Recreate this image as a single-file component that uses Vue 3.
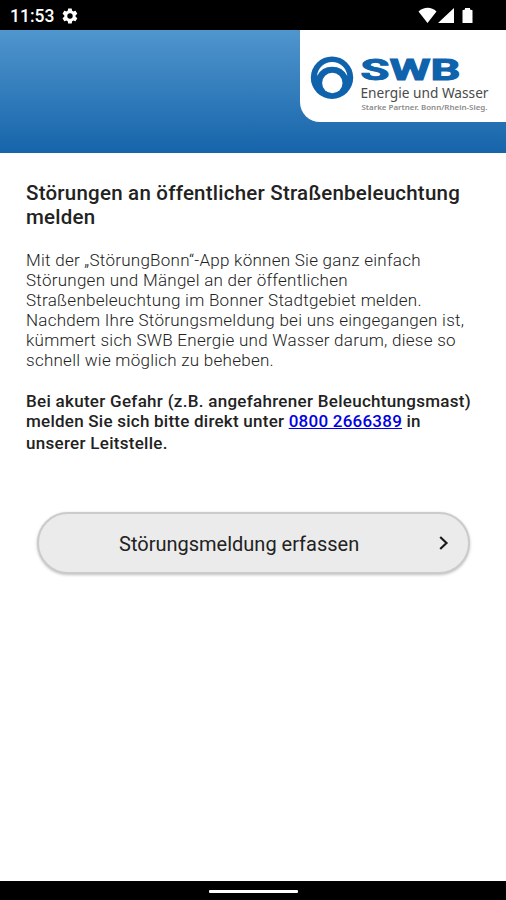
<script setup>
const intro = [
  'Mit der „StörungBonn“-App können Sie ganz einfach',
  'Störungen und Mängel an der öffentlichen',
  'Straßenbeleuchtung im Bonner Stadtgebiet melden.',
  'Nachdem Ihre Störungsmeldung bei uns eingegangen ist,',
  'kümmert sich SWB Energie und Wasser darum, diese so',
  'schnell wie möglich zu beheben.',
]
</script>

<template>
  <div class="screen">
    <div class="status">
      <span class="time">11:53</span>
      <svg class="gear" width="18" height="18" viewBox="0 0 24 24">
        <path fill="#fff" fill-rule="evenodd" d="M19.4 13c.1-.3.1-.7.1-1s0-.7-.1-1l2.1-1.600c.2-.2.2-.4.1-.6l-2-3.500c-.1-.2-.4-.3-.6-.2l-2.500 1c-.5-.4-1.100-.7-1.700-1l-.4-2.600c0-.3-.2-.5-.5-.5h-4c-.2 0-.5.200-.5.400l-.4 2.700c-.6.200-1.200.6-1.700 1l-2.500-1c-.2-.1-.5 0-.6.200l-2 3.500c-.1.200-.1.500.1.600l2.100 1.600c0 .3-.1.700-.1 1s0 .7.100 1l-2.100 1.600c-.2.200-.2.400-.1.600l2 3.500c.1.200.4.300.6.200l2.500-1c.5.400 1.100.7 1.700 1l.4 2.600c0 .3.200.5.500.5h4c.2 0 .5-.2.500-.4l.4-2.700c.6-.2 1.200-.6 1.700-1l2.500 1c.2.100.5 0 .6-.2l2-3.500c.1-.2.100-.5-.1-.6zM12 15.600a3.600 3.600 0 1 1 0-7.200 3.600 3.600 0 0 1 0 7.200z" />
      </svg>
      <svg class="signals" width="56" height="18" viewBox="0 0 56 18">
        <path fill="#fff" d="M.5 4.500C6-.4 13.500-.4 18.500 4.500L9.500 16zM20 16 36 1v15zM44.500 3.200 47 2.500V1h5v1.500l2.500.7V16h-10z" />
      </svg>
    </div>

    <header class="banner">
      <div class="logo">
        <svg width="206" height="92" viewBox="0 0 206 92">
          <circle cx="32" cy="47.700" r="21.200" fill="#0f63ad" />
          <path fill="#fff" d="M17 46A15.200 15.200 0 0 1 47.300 46A17 17 0 0 0 17 46Z" />
          <circle cx="32.300" cy="53" r="10.200" fill="#fff" />
          <text class="swb" x="60.500" y="50" textLength="100" lengthAdjust="spacingAndGlyphs">SWB</text>
          <text class="name" x="60.500" y="68" textLength="128" lengthAdjust="spacingAndGlyphs">Energie und Wasser</text>
          <text class="claim" x="61.500" y="80" textLength="126" lengthAdjust="spacingAndGlyphs">Starke Partner. Bonn/Rhein-Sieg.</text>
        </svg>
      </div>
    </header>

    <main class="content">
      <h1>Störungen an öffentlicher Straßenbeleuchtung<br />melden</h1>
      <p class="intro"><span v-for="line in intro" :key="line">{{ line }}</span></p>
      <p class="urgent">
        <span>Bei akuter Gefahr (z.B. angefahrener Beleuchtungsmast)</span>
        <span class="phone">melden Sie sich bitte direkt unter <a href="tel:08002666389">0800 2666389</a> in</span>
        <span class="last">unserer Leitstelle.</span>
      </p>
      <button type="button">
        <span>Störungsmeldung erfassen</span>
        <svg width="12" height="16" viewBox="0 0 12 16"><path d="M2.200 2 8.500 8 2.200 14" fill="none" stroke="#1c1c1c" stroke-width="2.200" /></svg>
      </button>
    </main>

    <div class="navbar"><i></i></div>
  </div>
</template>

<style>
body {
  margin: 0;
}
</style>

<style scoped>
.screen {
  width: 506px;
  height: 900px;
  display: flex;
  flex-direction: column;
  background: #fff;
  font-family: Roboto, sans-serif;
  overflow: hidden;
}
.status {
  height: 30px;
  flex: none;
  box-sizing: border-box;
  padding: 1px 32px 0 10px;
  background: #000;
  color: #fff;
  display: flex;
  align-items: center;
}
.time {
  width: 44px;
  font-size: 17.500px;
  font-weight: 500;
  white-space: nowrap;
}
.gear {
  margin-left: 7px;
}
.signals {
  margin-left: auto;
}
.banner {
  height: 123px;
  flex: none;
  display: flex;
  justify-content: flex-end;
  align-items: flex-start;
  background: linear-gradient(#5096ce, #1664aa);
}
.logo {
  width: 206px;
  height: 92px;
  background: #fff;
  border-bottom-left-radius: 20px;
}
.logo svg {
  display: block;
}
.swb {
  font: 700 30px Roboto, sans-serif;
  fill: #0f63ad;
  stroke: #0f63ad;
  stroke-width: 1px;
}
.name {
  font: 15px "Noto Sans", sans-serif;
  fill: #4a4a4a;
}
.claim {
  font: 600 7.500px "Noto Sans", sans-serif;
  fill: #8b8b8b;
}
.content {
  flex: 1;
  padding: 28px 26px 0;
}
h1 {
  margin: 0;
  font-size: 20.500px;
  line-height: 24px;
  font-weight: 500;
  letter-spacing: 0.230px;
  color: #222;
  white-space: nowrap;
}
p {
  margin: 0;
  white-space: nowrap;
}
p span {
  display: block;
}
.intro {
  margin-top: 21px;
  font-size: 17px;
  line-height: 20.100px;
  font-weight: 300;
  letter-spacing: 0.260px;
  color: #222;
}
.urgent {
  margin-top: 20px;
  font-size: 17px;
  line-height: 20.500px;
  font-weight: 500;
  letter-spacing: 0.290px;
  color: #222;
}
.urgent .phone {
  letter-spacing: 0.240px;
}
.urgent .last {
  padding-top: 1px;
}
a {
  color: #0000e6;
}
button {
  width: 433px;
  height: 62px;
  margin: 58.600px 0 0 11px;
  padding: 2px 18px 0 80px;
  display: flex;
  align-items: center;
  justify-content: space-between;
  border: 2px solid #cbcbcb;
  border-radius: 31px;
  background: #ebebeb;
  box-shadow: 0 1px 3px rgba(0, 0, 0, 0.250);
  color: #222;
  font: 400 20px Roboto, sans-serif;
}
button svg {
  margin-bottom: 1px;
}
.navbar {
  height: 19px;
  flex: none;
  background: #000;
  display: flex;
  justify-content: center;
  align-items: center;
}
.navbar i {
  width: 89px;
  height: 3px;
  margin-top: 2px;
  border-radius: 1px;
  background: #fff;
}
</style>
